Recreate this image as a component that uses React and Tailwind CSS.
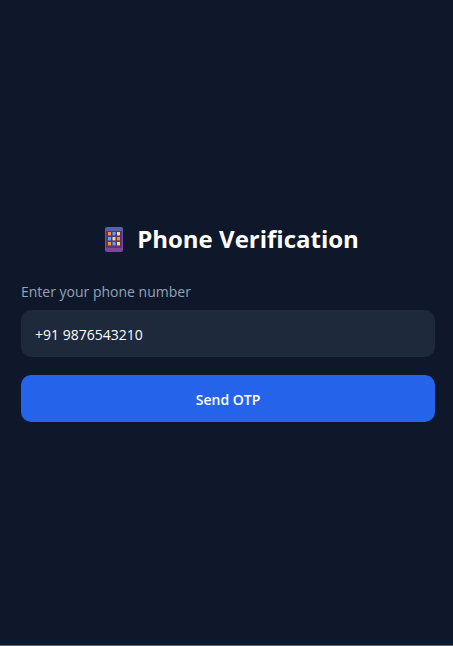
import { useState } from "react";

const KEY_COLORS = [
  ["#ff8b3d", "#38b6f1", "#ffe34a"],
  ["#38b6f1", "#ffe34a", "#ff8b3d"],
  ["#ff8b3d", "#38b6f1", "#ffe34a"],
];

function PhoneIcon() {
  return (
    <svg width="26" height="25" viewBox="-8 0 26 25" aria-hidden="true">
      <defs>
        <linearGradient id="phone-body" x1="0" y1="0" x2="0" y2="1">
          <stop offset="0" stopColor="#5563ac" />
          <stop offset="1" stopColor="#80459a" />
        </linearGradient>
        <linearGradient id="phone-screen" x1="0" y1="0" x2="0" y2="1">
          <stop offset="0" stopColor="#4c3672" />
          <stop offset="1" stopColor="#6a2f70" />
        </linearGradient>
      </defs>
      <rect width="18" height="25" rx="2" fill="url(#phone-body)" />
      <rect x="1" y="4" width="16" height="17" fill="url(#phone-screen)" />
      {KEY_COLORS.map((row, r) =>
        row.map((c, i) => (
          <rect key={`${r}-${i}`} x={3 + i * 4.5} y={5 + r * 5} width="3" height="3.4" fill={c} />
        ))
      )}
    </svg>
  );
}

export default function App() {
  const [phone, setPhone] = useState("+91 9876543210");
  return (
    <main className="flex min-h-screen flex-col justify-center border-b border-[#1976c8] bg-[#0f172a] pr-[18px] pb-0.5 pl-[21px] font-['Open_Sans','Noto_Sans',sans-serif]">
      <form className="flex flex-col" onSubmit={(e) => e.preventDefault()}>
        <h1 className="mb-[25px] flex items-center justify-center gap-3.5 text-2xl leading-9 font-bold text-white">
          <PhoneIcon />
          Phone Verification
        </h1>
        <label htmlFor="phone" className="mb-2 text-sm leading-5 text-[#94a3b8]">
          Enter your phone number
        </label>
        <input
          id="phone"
          type="tel"
          value={phone}
          onChange={(e) => setPhone(e.target.value)}
          className="mb-[18px] h-[47px] w-full rounded-[10px] bg-[#1e293b] px-3.5 pt-0.5 text-sm text-white outline-none"
        />
        <button
          type="submit"
          className="h-[47px] w-full rounded-[10px] bg-[#2563eb] pt-0.5 text-sm font-semibold text-white"
        >
          Send OTP
        </button>
      </form>
    </main>
  );
}
